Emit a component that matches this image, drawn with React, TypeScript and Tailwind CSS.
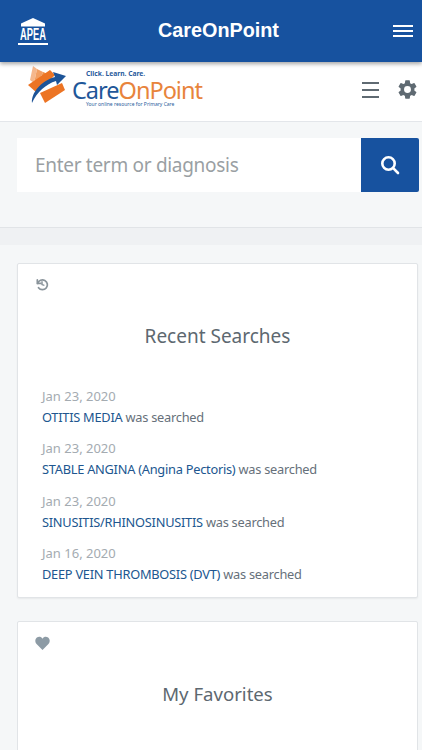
import React from "react";

const font = { fontFamily: '"Noto Sans", sans-serif' };

function ApeaLogo() {
  return (
    <div className="flex w-[30px] flex-col items-center">
      <svg width="26" height="9" viewBox="0 0 26 9" className="block">
        <path d="M13 0 L25 5.5 L25 8.5 L1 8.5 L1 5.5 Z" fill="#fff" />
      </svg>
      <div className="mt-[1px] h-[14px] origin-top scale-x-[0.72] scale-y-[1.2] text-[13px] leading-[12px] font-bold text-white [font-family:'Liberation_Sans',sans-serif]">
        APEA
      </div>
      <div className="mt-[1px] h-[2px] w-[30px] bg-white" />
    </div>
  );
}

function LogoMark() {
  return (
    <svg width="38" height="39" viewBox="0 0 38 39" className="shrink-0">
      <path d="M5 1 L2 15 L6 18 L9 4 Z" fill="#f5b78c" />
      <path d="M9 4 L6 18 L10 20 L15 7 Z" fill="#f29f63" />
      <path d="M15 7 L10 20 L13 22 L20 9 Z" fill="#ef8a40" />
      <path d="M0 20 L22 5 L27 10 L9 28 Z" fill="#ec7424" />
      <path d="M12 28 L34 18 L37 25 L17 38 Z" fill="#ec7424" />
      <path d="M4 38 C3 28 13 16 27 12 L25 7 L38 11 L29 20 L28 16 C18 19 9 27 4 38 Z" fill="#1d5498" />
    </svg>
  );
}

function Row({ date, term }: { date: string; term: string }) {
  return (
    <div className="h-[52.3px]">
      <div className="text-[13px] leading-[20px] text-[#a4abb1]">{date}</div>
      <div className="mt-[1px] text-[12.8px] leading-[20px] tracking-[-0.25px] text-[#66707a]">
        <span className="text-[#20568f]">{term}</span> was searched
      </div>
    </div>
  );
}

export default function App() {
  return (
    <div className="h-[750px] w-[422px] overflow-hidden bg-[#f5f7f8]" style={font}>
      <header className="relative z-10 flex h-[62px] items-center justify-between bg-[#17529f] pr-[9px] pl-[18px] shadow-[0_2px_4px_rgba(0,0,0,0.35)]">
        <ApeaLogo />
        <div className="-ml-[4px] text-[19.8px] font-bold text-white [font-family:'Liberation_Sans',sans-serif]">CareOnPoint</div>
        <div className="flex w-[20px] flex-col gap-[3px]">
          <div className="h-[2px] bg-white" />
          <div className="h-[2px] bg-white" />
          <div className="h-[2px] bg-white" />
        </div>
      </header>

      <div className="flex h-[60px] items-start justify-between border-b border-[#e3e6ea] bg-white pt-[3px] pr-[3px] pl-[28px]">
        <div className="flex items-start gap-[6px]">
          <LogoMark />
          <div className="mt-[4px] flex flex-col">
            <div className="ml-[14px] text-[6.7px] leading-[9px] font-bold text-[#2a5c9c]">Click. Learn. Care.</div>
            <div className="text-[23.5px] leading-[24px] tracking-[-1px]">
              <span className="text-[#1f5799]">Care</span>
              <span className="text-[#e8843c]">OnPoint</span>
            </div>
            <div className="-mt-[2px] ml-[14px] text-[5px] leading-[8px] text-[#2a5c9c]">Your online resource for Primary Care</div>
          </div>
        </div>
        <div className="mt-[13px] flex items-center gap-[17px]">
          <div className="flex w-[17px] flex-col gap-[5px]">
            <div className="h-[2px] bg-[#5f6a72]" />
            <div className="h-[2px] bg-[#5f6a72]" />
            <div className="h-[2px] bg-[#5f6a72]" />
          </div>
          <svg width="23" height="23" viewBox="0 0 24 24" fill="#5f6a72">
            <path d="M19.14 12.94c.04-.3.06-.61.06-.94s-.02-.64-.07-.94l2.03-1.58a.49.49 0 0 0 .12-.61l-1.92-3.32a.49.49 0 0 0-.59-.22l-2.39.96a7 7 0 0 0-1.62-.94l-.36-2.54a.48.48 0 0 0-.48-.41h-3.84a.48.48 0 0 0-.47.41l-.36 2.54c-.59.24-1.13.57-1.62.94l-2.39-.96a.48.48 0 0 0-.59.22L2.73 8.87a.48.48 0 0 0 .12.61l2.03 1.58c-.05.3-.08.63-.08.94s.02.64.07.94l-2.03 1.58a.49.49 0 0 0-.12.61l1.92 3.32c.12.22.37.29.59.22l2.39-.96c.5.38 1.03.7 1.62.94l.36 2.54c.05.24.24.41.48.41h3.84c.24 0 .44-.17.47-.41l.36-2.54c.59-.24 1.13-.56 1.62-.94l2.39.96c.22.08.47 0 .59-.22l1.92-3.32a.48.48 0 0 0-.12-.61l-2.01-1.58zM12 15.6A3.6 3.6 0 1 1 12 8.4a3.6 3.6 0 0 1 0 7.2z" />
          </svg>
        </div>
      </div>

      <div className="h-[106px] border-b border-[#e1e4e7] pt-[16px] pr-[3px] pl-[17px]">
        <div className="flex h-[54px]">
          <div className="flex flex-1 items-center bg-white pl-[18px] text-[19px] tracking-[-0.3px] text-[#9a9fa3]">Enter term or diagnosis</div>
          <div className="flex w-[58px] items-center justify-center rounded-r-[2px] bg-[#17529f]">
            <svg width="20" height="20" viewBox="0 0 20 20" fill="none" stroke="#fff" strokeWidth="2.6" strokeLinecap="round">
              <circle cx="8.5" cy="8.5" r="6.2" />
              <path d="M13.2 13.2 L18 18" />
            </svg>
          </div>
        </div>
      </div>

      <div className="h-[17px] bg-[#eff1f3]" />

      <main className="flex flex-col gap-[23px] pt-[18px] pr-[4px] pl-[17px]">
        <section className="h-[335px] rounded-[2px] border border-[#e1e4e7] bg-white pt-[13px] shadow-[0_1px_2px_rgba(0,0,0,0.06)]">
          <div className="pl-[17px]">
            <svg width="14" height="14" viewBox="0 0 24 24" fill="none" stroke="#8a949b" strokeWidth="3" strokeLinecap="round" strokeLinejoin="round">
              <path d="M4 5v6h6" />
              <path d="M4.6 11A8.5 8.5 0 1 1 6 18.5" />
              <path d="M12 8v5l3 1" strokeWidth="2.5" />
            </svg>
          </div>
          <h2 className="mt-[29px] text-center text-[19px] leading-[32px] text-[#5d6870]">Recent Searches</h2>
          <div className="mt-[34px] pl-[24px]">
            <Row date="Jan 23, 2020" term="OTITIS MEDIA" />
            <Row date="Jan 23, 2020" term="STABLE ANGINA (Angina Pectoris)" />
            <Row date="Jan 23, 2020" term="SINUSITIS/RHINOSINUSITIS" />
            <Row date="Jan 16, 2020" term="DEEP VEIN THROMBOSIS (DVT)" />
          </div>
        </section>

        <section className="h-[200px] rounded-[2px] border border-[#e1e4e7] bg-white pt-[14px]">
          <div className="pl-[17px]">
            <svg width="15" height="14" viewBox="0 0 24 22" fill="#8d9ba5">
              <path d="M12 22 L2.5 12.5 C-0.5 9.5 0 4.5 3 2.2 C6 0 10 0.8 12 4 C14 0.8 18 0 21 2.2 C24 4.5 24.5 9.5 21.5 12.5 Z" />
            </svg>
          </div>
          <h2 className="mt-[28px] text-center text-[18.6px] leading-[32px] text-[#5d6870]">My Favorites</h2>
        </section>
      </main>
    </div>
  );
}
